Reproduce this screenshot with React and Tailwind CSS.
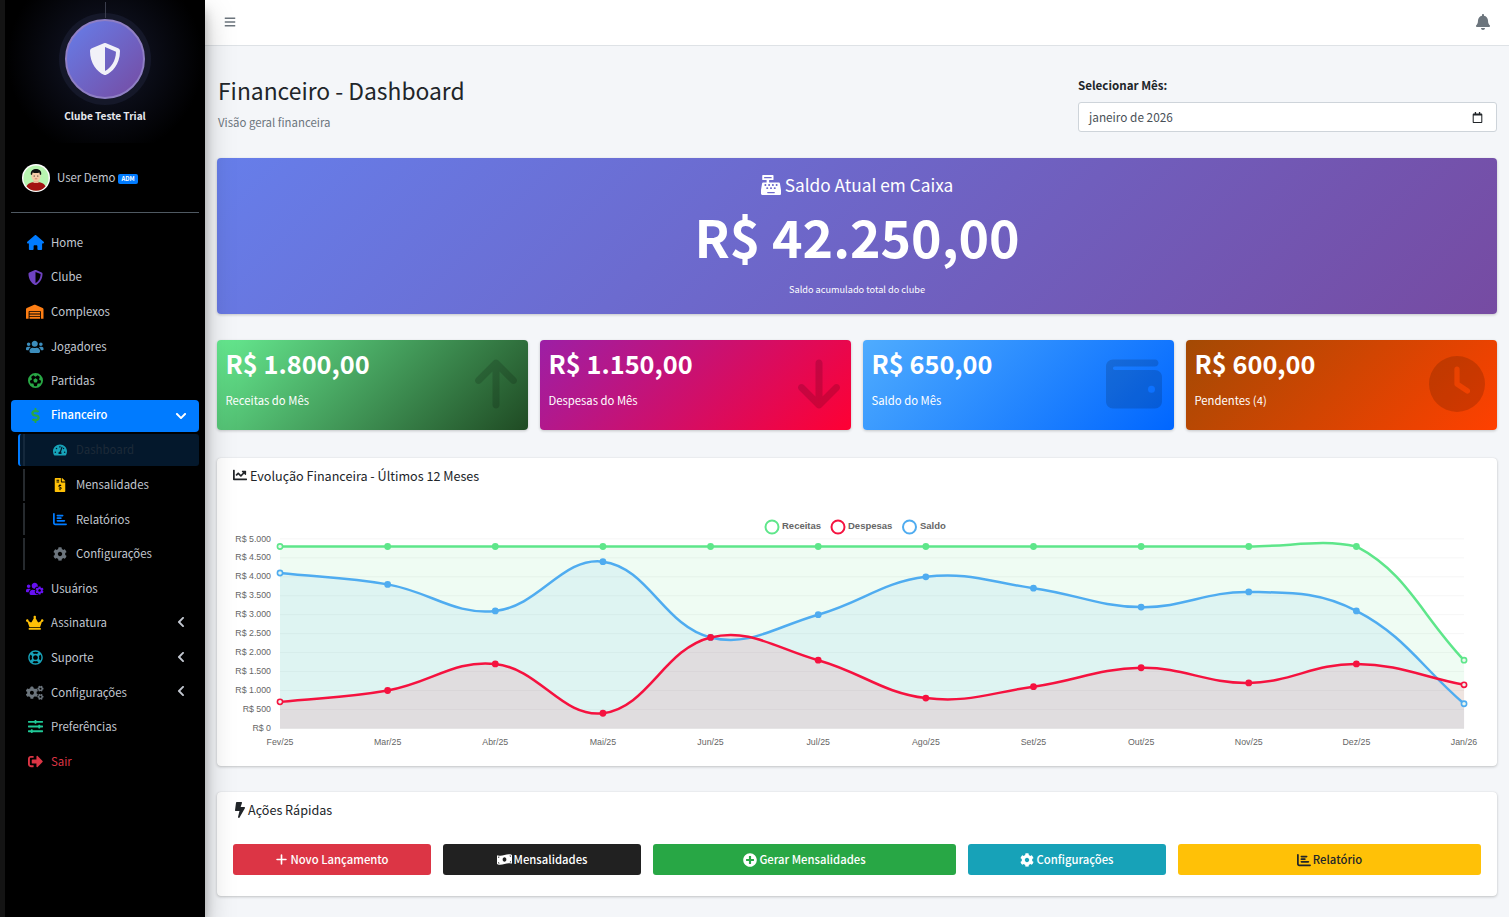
import {
  FaShieldAlt, FaWarehouse, FaUsers, FaDollarSign, FaChevronDown, FaChevronLeft,
  FaTachometerAlt, FaFileInvoiceDollar, FaCog, FaUsersCog, FaCrown, FaRegLifeRing, FaCogs,
  FaSlidersH, FaSignOutAlt, FaBars, FaBell, FaCashRegister, FaChartLine, FaBolt, FaMoneyBillWave,
  FaPlusCircle, FaRegCalendar,
} from "react-icons/fa";
import { FaArrowUp, FaArrowDown, FaWallet, FaClock, FaHouse, FaFutbol, FaChartBar, FaPlus } from "react-icons/fa6";

const months = ["Fev/25", "Mar/25", "Abr/25", "Mai/25", "Jun/25", "Jul/25", "Ago/25", "Set/25", "Out/25", "Nov/25", "Dez/25", "Jan/26"];
const series = [
  { name: "Receitas", color: "#5ee68a", data: [4800, 4800, 4800, 4800, 4800, 4800, 4800, 4800, 4800, 4800, 4800, 1800] },
  { name: "Saldo", color: "#4facf0", data: [4100, 3800, 3100, 4400, 2400, 3000, 4000, 3700, 3200, 3600, 3100, 650] },
  { name: "Despesas", color: "#f5123f", data: [700, 1000, 1700, 400, 2400, 1800, 800, 1100, 1600, 1200, 1700, 1150] },
];

const TOP = 538.9;
const BOTTOM = 728.4;
const px = (i) => 280 + i * 107.64;
const py = (v) => BOTTOM - (v / 5000) * (BOTTOM - TOP);
const cap = (y) => Math.min(BOTTOM, Math.max(TOP, y));

// same spline as a line chart with tension 0.4, control points kept inside the plot
const buildPath = (data) => {
  const pts = data.map((v, i) => ({ x: px(i), y: py(v) }));
  const ctrl = pts.map((p, i) => {
    const a = pts[i - 1] || p;
    const b = pts[i + 1] || p;
    const d1 = Math.hypot(p.x - a.x, p.y - a.y);
    const d2 = Math.hypot(b.x - p.x, b.y - p.y);
    const s1 = d1 + d2 ? (0.4 * d1) / (d1 + d2) : 0;
    const s2 = d1 + d2 ? (0.4 * d2) / (d1 + d2) : 0;
    return {
      px: p.x - s1 * (b.x - a.x), py: cap(p.y - s1 * (b.y - a.y)),
      nx: p.x + s2 * (b.x - a.x), ny: cap(p.y + s2 * (b.y - a.y)),
    };
  });
  let d = `M${pts[0].x} ${pts[0].y}`;
  for (let i = 1; i < pts.length; i++) {
    d += ` C${ctrl[i - 1].nx} ${ctrl[i - 1].ny} ${ctrl[i].px} ${ctrl[i].py} ${pts[i].x} ${pts[i].y}`;
  }
  return d;
};

const menu = [
  { label: "Home", Icon: FaHouse, color: "text-[#007bff] text-[17px]" },
  { label: "Clube", Icon: FaShieldAlt, color: "text-[#6f42c1] text-[15px]" },
  { label: "Complexos", Icon: FaWarehouse, color: "text-[#fd7e14] text-[17.5px]" },
  { label: "Jogadores", Icon: FaUsers, color: "text-[#3c8dbc] text-[17.5px]" },
  { label: "Partidas", Icon: FaFutbol, color: "text-[#28a745] text-[15px]" },
];

const submenu = [
  { label: "Dashboard", Icon: FaTachometerAlt, color: "text-[#17a2b8]", active: true },
  { label: "Mensalidades", Icon: FaFileInvoiceDollar, color: "text-[#ffc107]" },
  { label: "Relatórios", Icon: FaChartBar, color: "text-[#007bff]" },
  { label: "Configurações", Icon: FaCog, color: "text-[#6c757d]" },
];

const menuBottom = [
  { label: "Usuários", Icon: FaUsersCog, color: "text-[#6610f2] text-[17.5px]" },
  { label: "Assinatura", Icon: FaCrown, color: "text-[#ffc107] text-[17.5px]", arrow: true },
  { label: "Suporte", Icon: FaRegLifeRing, color: "text-[#17a2b8] text-[15px]", arrow: true },
  { label: "Configurações", Icon: FaCogs, color: "text-[#6c757d] text-[17.5px]", arrow: true },
  { label: "Preferências", Icon: FaSlidersH, color: "text-[#20c997] text-[15px]" },
  { label: "Sair", Icon: FaSignOutAlt, color: "text-[#dc3545] text-[15px]", text: "text-[#dc3545]" },
];

const stats = [
  { value: "R$ 1.800,00", label: "Receitas do Mês", Icon: FaArrowUp, pos: "right-[4px]", bg: "bg-[linear-gradient(135deg,#66ea90,#1f4a23)]" },
  { value: "R$ 1.150,00", label: "Despesas do Mês", Icon: FaArrowDown, pos: "right-[4px]", bg: "bg-[linear-gradient(135deg,#9c1fa6,#ff0033)]" },
  { value: "R$ 650,00", label: "Saldo do Mês", Icon: FaWallet, pos: "right-[12px]", bg: "bg-[linear-gradient(135deg,#4facfe,#0066ff)]" },
  { value: "R$ 600,00", label: "Pendentes (4)", Icon: FaClock, pos: "right-[12px]", bg: "bg-[linear-gradient(135deg,#a34a04,#ff4000)]" },
];

const actions = [
  { label: "Novo Lançamento", Icon: FaPlus, size: "text-[13px]", cls: "col-span-2 bg-[#dc3545] text-white" },
  { label: "Mensalidades", Icon: FaMoneyBillWave, size: "text-[15px]", cls: "col-span-2 bg-[#212121] text-white" },
  { label: "Gerar Mensalidades", Icon: FaPlusCircle, size: "text-[14px]", cls: "col-span-3 bg-[#28a745] text-white" },
  { label: "Configurações", Icon: FaCog, size: "text-[14px]", cls: "col-span-2 bg-[#17a2b8] text-white" },
  { label: "Relatório", Icon: FaChartBar, size: "text-[14px]", cls: "col-span-3 bg-[#ffc107] text-[#212529]" },
];

const MenuItem = ({ label, Icon, color, text, arrow }) => (
  <li className="h-[32px] mb-[2.6px] flex items-center pl-[14px] pr-[15px] relative">
    <span className="w-[20px] flex justify-center shrink-0">
      <Icon className={color} />
    </span>
    <span className={`ml-[6px] text-[11.4px] leading-none ${text || "text-[#c2c7d0]"}`}>{label}</span>
    {arrow && <FaChevronLeft className="absolute right-[12px] top-[9px] text-[12px] text-[#c2c7d0]" />}
  </li>
);

const Avatar = () => (
  <svg viewBox="0 0 28 28" className="w-[28px] h-[28px] shrink-0">
    <circle cx="14" cy="14" r="14" fill="#fff" />
    <circle cx="14" cy="14" r="12.6" fill="#b8f5b0" />
    <path d="M4.5 22.5c1.5-3.6 5-4.6 9.5-4.6s8 1 9.5 4.6a12.6 12.6 0 0 1-19 0z" fill="#a31212" />
    <rect x="11.5" y="14.5" width="5" height="4.5" fill="#e8b898" />
    <ellipse cx="14" cy="12" rx="4.6" ry="5.2" fill="#f6cba8" />
    <path d="M8.8 10.5c-.4-4 2.5-5.500 5.200-5.500s5.800 1.500 5.200 5.500l-1.200.5-.6-2.500c-2 .8-4.500.8-6.800 0l-.6 2.500z" fill="#111" />
    <circle cx="12.2" cy="12" r=".6" fill="#111" />
    <circle cx="15.8" cy="12" r=".6" fill="#111" />
    <path d="M12.8 14.8h2.4" stroke="#b5533c" strokeWidth=".6" />
  </svg>
);

const Sidebar = () => (
  <aside className="w-[205px] shrink-0 bg-black border-l-[5px] border-[#141414] shadow-[0_14px_28px_rgba(0,0,0,0.25),0_10px_10px_rgba(0,0,0,0.22)] relative z-10">
    <div className="h-[143px] flex flex-col items-center relative bg-[radial-gradient(circle_at_50%_59px,#1b2036_0%,#0b0d18_45px,#000_98px)]">
      <div className="absolute top-[2px] left-[100px] w-px h-[16px] bg-[#3a3d4c]" />
      <div className="mt-[13px] w-[92px] h-[92px] rounded-full bg-[#151829] flex items-center justify-center">
        <div className="w-[80px] h-[80px] rounded-full border-2 border-[#8f7fc4] bg-[linear-gradient(135deg,#667eea,#764ba2)] flex items-center justify-center">
          <FaShieldAlt className="text-[32px] text-[#f1f1f8]" />
        </div>
      </div>
      <span className="mt-[4px] text-[10.1px] font-bold leading-[14px] text-[#e6e8ee]">Clube Teste Trial</span>
    </div>
    <div className="h-[70px] ml-[6px] mr-[6px] pl-[11px] pt-[21px] flex items-start border-b border-[#4f5962]">
      <Avatar />
      <span className="ml-[7px] mt-[5px] text-[11.4px] leading-[17px] text-[#c2c7d0]">User Demo</span>
      <span className="ml-[3px] mt-[10px] h-[10px] px-[3px] rounded-[2px] bg-[#007bff] text-white text-[6px] font-bold leading-[10px]">ADM</span>
    </div>
    <ul className="mt-[13.6px] ml-[6px] mr-[6px]">
      {menu.map((m) => <MenuItem key={m.label} {...m} />)}
      <li className="h-[32px] mb-[2.6px] flex items-center pl-[14px] pr-[15px] rounded-[4px] bg-[#007bff] shadow-sm">
        <span className="w-[20px] flex justify-center"><FaDollarSign className="text-[15px] text-[#28a745]" /></span>
        <span className="ml-[6px] -mt-[1px] text-[11.2px] leading-none font-medium text-white">Financeiro</span>
        <FaChevronDown className="ml-auto -mr-[3px] text-[12px] text-white" />
      </li>
      {submenu.map(({ label, Icon, color, active }) => (
        <li
          key={label}
          className={`h-[32px] mb-[2.6px] ml-[7px] flex items-center rounded-[3px] ${active ? "bg-[#04182c] border-l-2 border-[#007bff] pl-[3px]" : "pl-[5px]"}`}
        >
          <span className={`h-full w-[2px] shrink-0 mr-[27px] ${active ? "bg-[#14283c]" : "bg-[#262a2e]"}`} />
          <span className="w-[16px] flex justify-center shrink-0"><Icon className={`text-[14px] ${color}`} /></span>
          <span className={`ml-[8px] text-[11.4px] leading-none ${active ? "text-[#1d2a38]" : "text-[#c2c7d0]"}`}>{label}</span>
        </li>
      ))}
      {menuBottom.map((m) => <MenuItem key={m.label} {...m} />)}
    </ul>
  </aside>
);

const Chart = () => {
  const ticks = [0, 500, 1000, 1500, 2000, 2500, 3000, 3500, 4000, 4500, 5000];
  const legend = [
    { name: "Receitas", color: "#5ee68a", cx: 772, x: 782 },
    { name: "Despesas", color: "#f5123f", cx: 838, x: 848 },
    { name: "Saldo", color: "#4facf0", cx: 909.5, x: 920 },
  ];
  return (
    <svg viewBox="217 500 1280 260" className="block w-[1280px] h-[260px] font-['Liberation_Sans',sans-serif]">
      {ticks.map((t) => (
        <g key={t}>
          <line x1="280" x2="1464" y1={py(t)} y2={py(t)} stroke="#000" strokeOpacity="0.04" />
          <text x="271" y={py(t) + 2.6} textAnchor="end" fontSize="8.8" fill="#666">
            {t === 0 ? "R$ 0" : `R$ ${t.toLocaleString("pt-BR")}`}
          </text>
        </g>
      ))}
      {months.map((m, i) => (
        <text key={m} x={px(i)} y="745" textAnchor="middle" fontSize="8.8" fill="#666">{m}</text>
      ))}
      {legend.map((l) => (
        <g key={l.name}>
          <circle cx={l.cx} cy="527" r="6.5" fill="#fff" stroke={l.color} strokeWidth="2" />
          <text x={l.x} y="529" fontSize="9.5" fontWeight="bold" fill="#666">{l.name}</text>
        </g>
      ))}
      {series.map((s) => (
        <path key={s.name} d={`${buildPath(s.data)} L${px(11)} ${BOTTOM} L280 ${BOTTOM} Z`} fill={s.color} fillOpacity="0.1" />
      ))}
      {series.map((s) => (
        <g key={s.name}>
          <path d={buildPath(s.data)} fill="none" stroke={s.color} strokeWidth="2.5" />
          {s.data.map((v, i) => (
            <circle
              key={i}
              cx={px(i)}
              cy={py(v)}
              r={i === 0 || i === 11 ? 2.6 : 3.4}
              fill={i === 0 || i === 11 ? "#e9f7ef" : s.color}
              stroke={s.color}
              strokeWidth={i === 0 || i === 11 ? 1.6 : 0}
            />
          ))}
        </g>
      ))}
    </svg>
  );
};

export default function App() {
  return (
    <div className="flex min-h-[917px] bg-[#f4f6f9] text-[#212529] font-['Noto_Sans_CJK_SC','Noto_Sans',sans-serif] overflow-hidden">
      <Sidebar />
      <div className="flex-1 min-w-0">
        <nav className="h-[46px] bg-white border-b border-[#dee2e6] flex items-center justify-between pl-[19px] pr-[18px]">
          <FaBars className="text-[12px] text-[#6c757d] -mt-[1px]" />
          <FaBell className="text-[16px] text-[#6c757d] -mt-[2px]" />
        </nav>

        <main className="px-[12px]">
          <div className="h-[112px] flex">
            <div className="flex-1">
              <h1 className="mt-[28px] ml-[1px] text-[22.85px] leading-[32px] font-normal text-[#212529]">Financeiro - Dashboard</h1>
              <p className="mt-[7px] ml-[1px] text-[11.4px] leading-[18px] text-[#6c757d]">Visão geral financeira</p>
            </div>
            <div className="w-[419px]">
              <label className="block mt-[31px] text-[11.6px] leading-[16px] font-bold">Selecionar Mês:</label>
              <div className="mt-[9px] h-[30px] bg-white border border-[#ced4da] rounded-[3px] flex items-center justify-between pl-[10px] pr-[13px]">
                <span className="text-[11.8px] leading-none text-[#495057]">janeiro de 2026</span>
                <FaRegCalendar className="text-[11px] text-[#212529]" />
              </div>
            </div>
          </div>

          <section className="h-[156px] rounded-[4px] bg-[linear-gradient(135deg,#667eea,#764ba2)] shadow-[0_1px_3px_rgba(0,0,0,0.2)] text-white text-center flex flex-col items-center">
            <div className="mt-[15px] flex items-center gap-[4px] text-[17.25px] leading-[24px]">
              <FaCashRegister className="text-[20px]" /> Saldo Atual em Caixa
            </div>
            <div className="mt-[9px] text-[51.8px] leading-[60px] font-bold">R$ 42.250,00</div>
            <div className="mt-[16px] text-[9.2px] leading-[14px]">Saldo acumulado total do clube</div>
          </section>

          <section className="mt-[26px] grid grid-cols-4 gap-[12px]">
            {stats.map(({ value, label, Icon, pos, bg }) => (
              <div key={value} className={`h-[90px] rounded-[4px] relative text-white shadow-[0_1px_3px_rgba(0,0,0,0.2)] overflow-hidden ${bg}`}>
                <div className="ml-[8.5px] mt-[6px] text-[25.35px] leading-[34px] font-bold">{value}</div>
                <div className="ml-[8.5px] mt-[12px] text-[11.3px] leading-[16px]">{label}</div>
                <Icon className={`absolute top-[16px] text-[56px] text-black/15 ${pos}`} />
              </div>
            ))}
          </section>

          <section className="mt-[28px] h-[308px] bg-white rounded-[4px] shadow-[0_0_1px_rgba(0,0,0,0.125),0_1px_3px_rgba(0,0,0,0.2)]">
            <div className="h-[42px] pl-[16px] pt-[9px] flex items-start gap-[3px] text-[12.6px] leading-[18px]">
              <FaChartLine className="text-[14px] mt-[1px]" /> Evolução Financeira - Últimos 12 Meses
            </div>
            <Chart />
          </section>

          <section className="mt-[26px] h-[104px] bg-white rounded-[4px] shadow-[0_0_1px_rgba(0,0,0,0.125),0_1px_3px_rgba(0,0,0,0.2)] px-[16px]">
            <div className="pt-[9px] -ml-[1px] flex items-center text-[12.6px] leading-[18px]">
              <FaBolt className="text-[16px]" /> Ações Rápidas
            </div>
            <div className="mt-[25px] grid grid-cols-12 gap-[12px]">
              {actions.map(({ label, Icon, size, cls }) => (
                <button key={label} className={`h-[31px] rounded-[3px] flex items-center justify-center gap-[2px] text-[11.3px] font-medium ${cls}`}>
                  <Icon className={size} /> {label}
                </button>
              ))}
            </div>
          </section>
        </main>
      </div>
    </div>
  );
}
